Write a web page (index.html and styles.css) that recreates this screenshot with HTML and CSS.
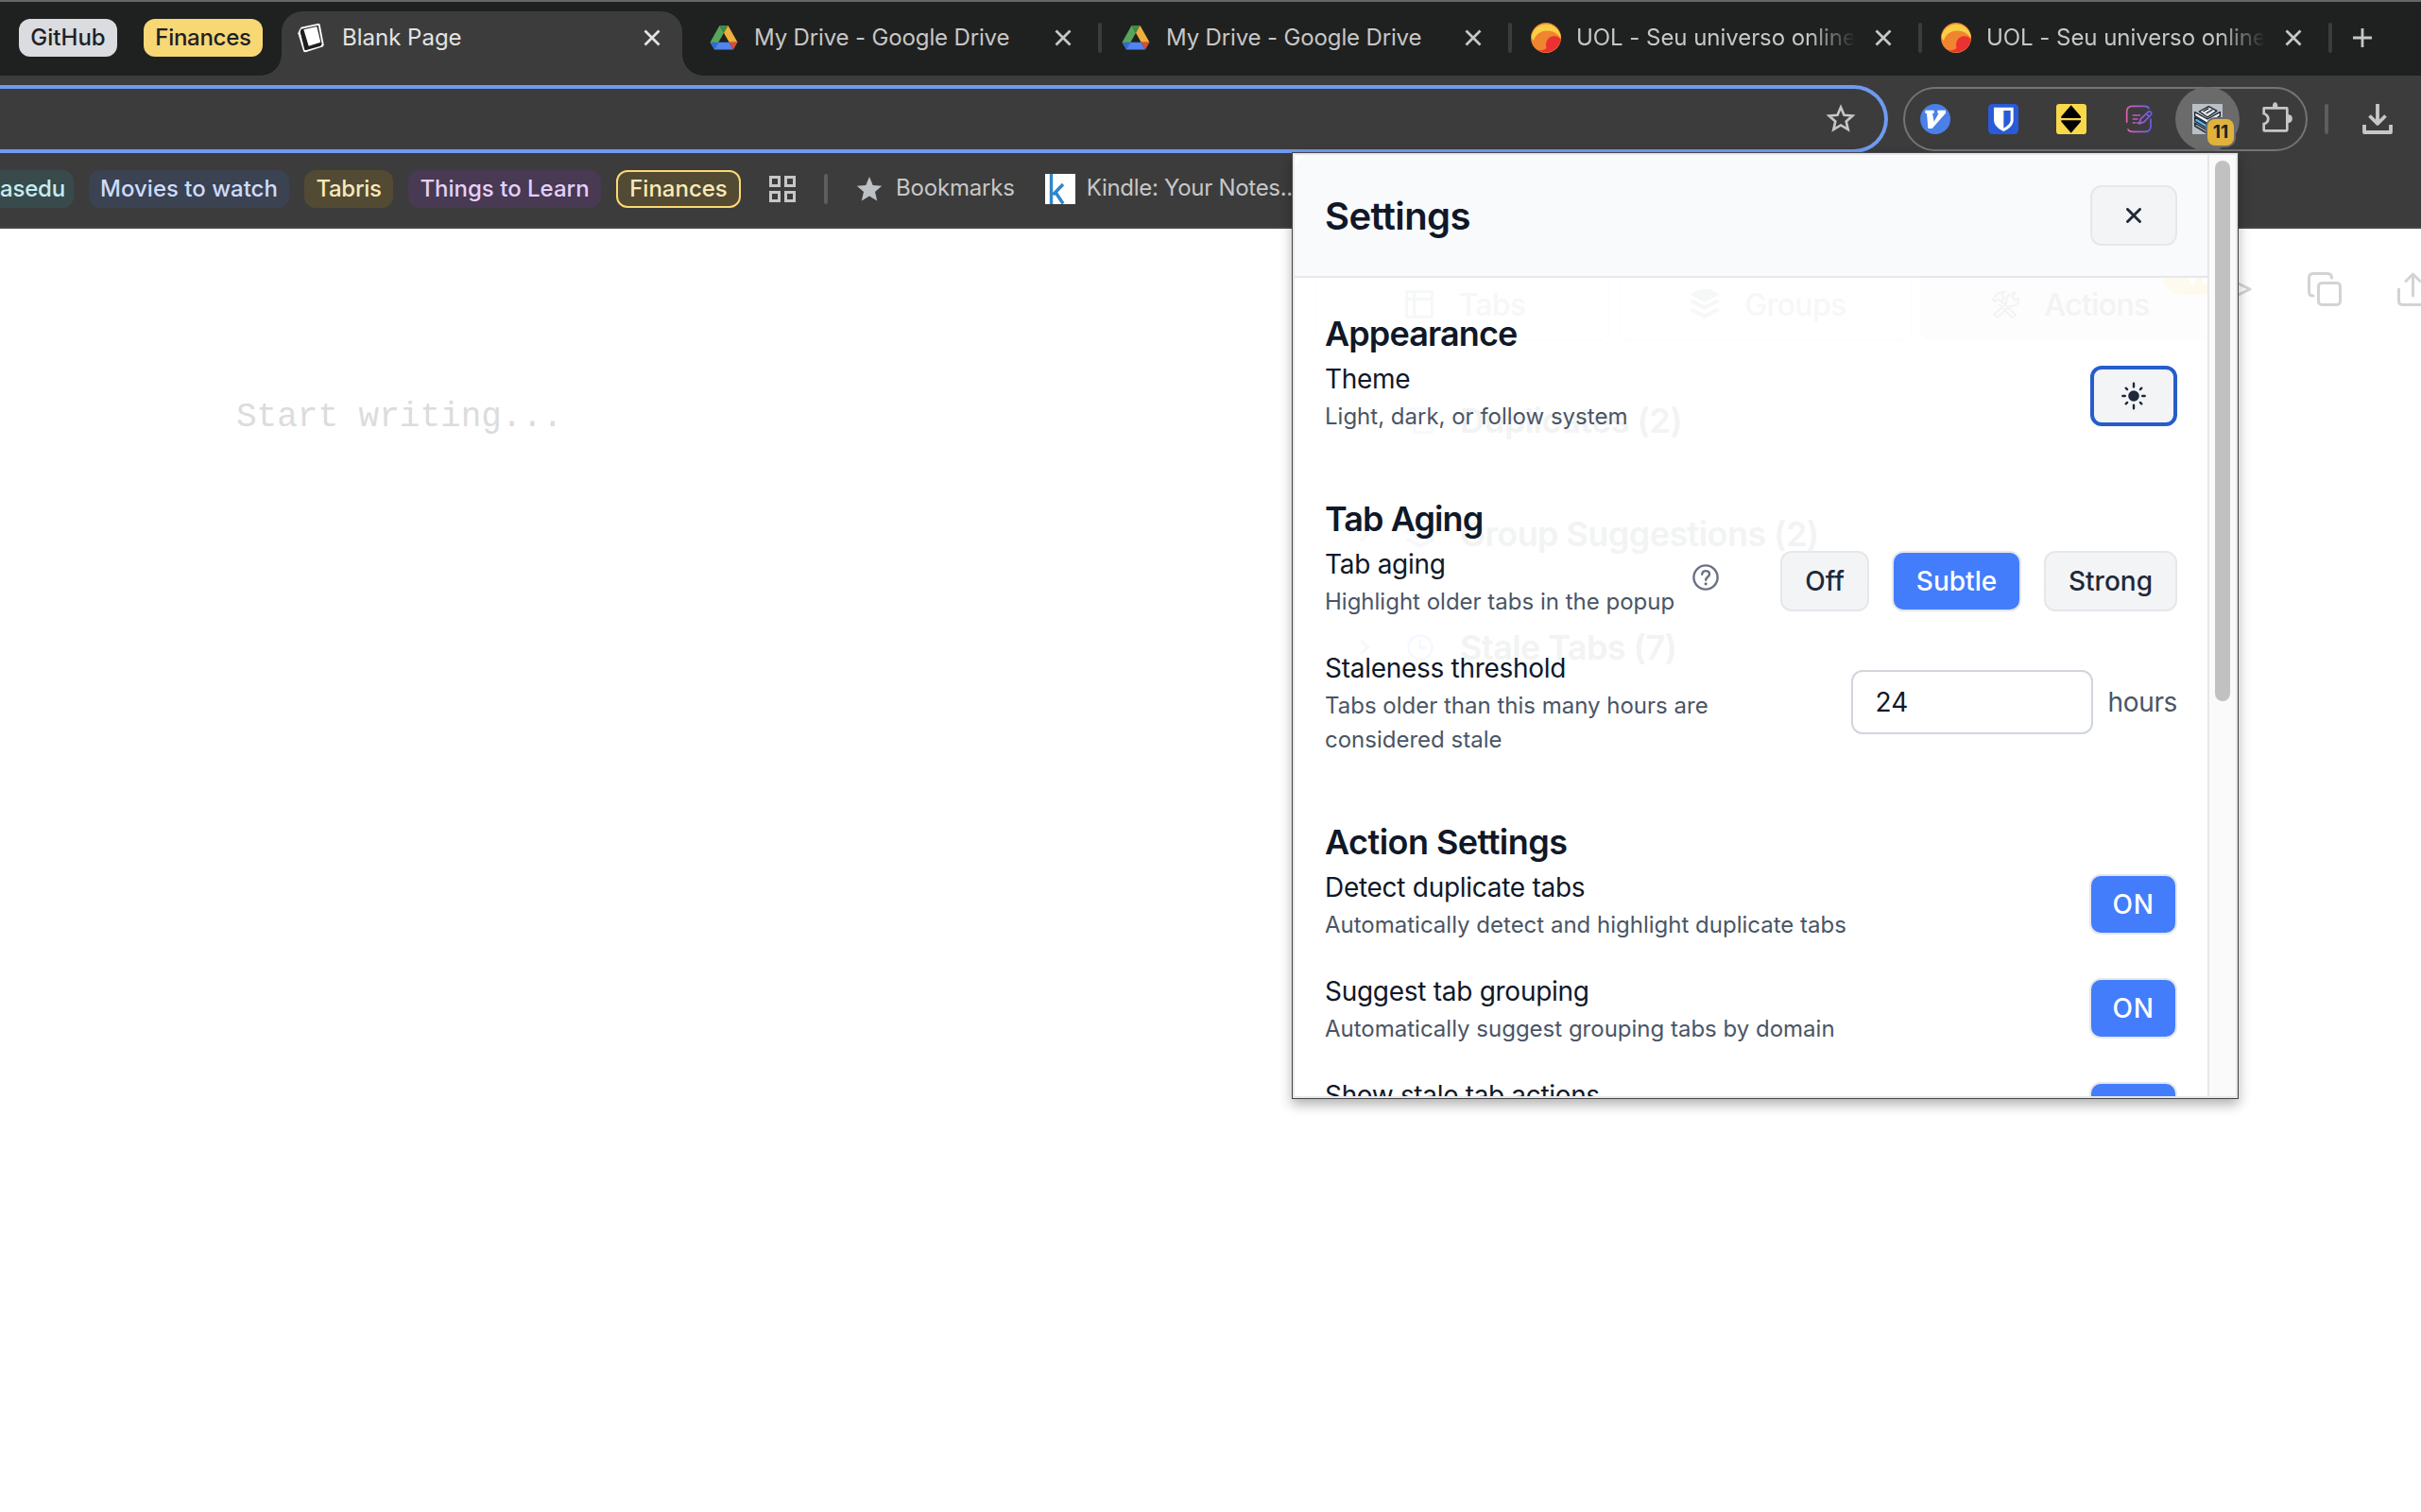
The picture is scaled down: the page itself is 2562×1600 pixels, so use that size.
FILE: index.html
```
<!DOCTYPE html>
<html lang="en">
<head>
<meta charset="utf-8">
<title>Blank Page</title>
<link rel="stylesheet" href="styles.css">
</head>
<body>
<svg class="defs" width="0" height="0">
  <symbol id="close" viewBox="0 0 24 24"><path d="M4.500 4.500 19.500 19.500M19.500 4.500 4.500 19.500" fill="none" stroke="currentColor" stroke-width="2.800"/></symbol>
  <symbol id="drive" viewBox="0 0 32 32">
    <path d="M11.500 3 1.500 20.700 6 28.500 16 10.800z" fill="#58a65b"/>
    <path d="M11.500 3h9L16 10.800z" fill="#3f8a45"/>
    <path d="M20.500 3 16 10.800 21.600 20.700h8.900z" fill="#f0ae3c"/>
    <path d="M1.500 20.700h8.900L6 28.500z" fill="#3567d6"/>
    <path d="M10.400 20.700h11.200L26 28.500H6z" fill="#5084ee"/>
    <path d="M21.600 20.700h8.900L26 28.500z" fill="#dc4c3a"/>
  </symbol>
  <symbol id="uol" viewBox="0 0 32 32">
    <circle cx="16" cy="16" r="16" fill="#f0852f"/>
    <path d="M.8 13A16 16 0 0 1 31.500 13l-.2 4C27 6 7 5 3 19 1.500 18 .6 15.500.8 13z" fill="#f9cf45"/>
    <path d="M31.800 18A16 16 0 0 1 7 28.500c4 1.500 8 .5 9.500-2-1.500-4 .5-11.500 7-12.300 4-.4 7 .8 8.300 3.800z" fill="#ec3230"/>
  </symbol>
  <symbol id="layers" viewBox="0 0 32 32"><path d="M16 -3 32 5.500 16 14 0 5.500zM3.500 11 16 17.500 28.500 11 32 13.500 16 22 0 13.500zM3.500 20 16 26.500 28.500 20 32 22.500 16 31 0 22.500z" fill="currentColor"/></symbol>
</svg>

<header class="tabstrip">
  <span class="chip chip-grey">GitHub</span>
  <span class="chip chip-yellow">Finances</span>
  <div class="tab tab-active">
    <svg class="favicon" viewBox="0 0 96 96"><path d="M8 24 L14 14 70 2 74 6 86 70 84 76 28 94 22 92 4 34z" fill="#fff"/><path d="M11 29 14 20 68 8 80 68 76 74 28 88 25 86z" fill="#1f1f1f"/><path d="M22 22 64 12 76 62 38 74z" fill="#fff"/></svg>
    <span class="tab-title">Blank Page</span>
    <svg class="tab-close"><use href="#close"/></svg>
  </div>
  <div class="tab tab-first">
    <svg class="favicon"><use href="#drive"/></svg>
    <span class="tab-title">My Drive - Google Drive</span>
    <svg class="tab-close"><use href="#close"/></svg>
  </div>
  <i class="sep"></i>
  <div class="tab">
    <svg class="favicon"><use href="#drive"/></svg>
    <span class="tab-title">My Drive - Google Drive</span>
    <svg class="tab-close"><use href="#close"/></svg>
  </div>
  <i class="sep"></i>
  <div class="tab">
    <svg class="favicon"><use href="#uol"/></svg>
    <span class="tab-title fade">UOL - Seu universo online</span>
    <svg class="tab-close"><use href="#close"/></svg>
  </div>
  <i class="sep"></i>
  <div class="tab">
    <svg class="favicon"><use href="#uol"/></svg>
    <span class="tab-title fade">UOL - Seu universo online</span>
    <svg class="tab-close"><use href="#close"/></svg>
  </div>
  <i class="sep"></i>
  <svg class="new-tab" viewBox="0 0 24 24"><path d="M12 2v20M2 12h20" stroke="currentColor" stroke-width="2.800"/></svg>
</header>

<div class="toolbar">
  <div class="omnibox">
    <svg class="fav-star" viewBox="0 0 32 32"><path d="M16 3.500l3.500 8.200 8.900.8-6.700 5.900 2 8.700L16 22.500l-7.700 4.600 2-8.700-6.700-5.900 8.900-.8z" fill="none" stroke="currentColor" stroke-width="2.600"/></svg>
  </div>
  <div class="extensions">
    <svg class="ext" viewBox="0 0 96 96"><circle cx="48" cy="48" r="48" fill="#4a80e8"/><path d="M16 20h28v10h-5l5 26 15-27h-4v-9h26v9L38 78H25l-4-48h-5z" fill="#fff"/></svg>
    <svg class="ext" viewBox="0 0 96 96"><rect width="96" height="96" rx="14" fill="#2a5bd7"/><path d="M18 11h62v40c0 17-16 29-31 36C34 80 18 68 18 51z" fill="#fff"/><path d="M49 21h22v30c0 11-10 19-22 26z" fill="#2a5bd7"/></svg>
    <svg class="ext" viewBox="0 0 96 96"><rect width="96" height="96" rx="10" fill="#f9d949"/><path d="M47 4 78 40v5H16v-5zM16 52h62v4L47 92 16 56z" fill="#000"/></svg>
    <svg class="ext" viewBox="0 0 96 96">
      <defs><linearGradient id="note" gradientUnits="userSpaceOnUse" x1="6" y1="0" x2="86" y2="0"><stop offset="0" stop-color="#e85fb0"/><stop offset="1" stop-color="#6a5cf0"/></linearGradient></defs>
      <g fill="none" stroke="url(#note)" stroke-width="5" stroke-linecap="round"><path d="M8 58V24C8 12 14 7 26 7h38c8 0 12 2 14 7M84 48v22c0 12-5 18-17 18H26c-8 0-12-2-14-7"/><path d="M28 36h22M28 48h14M28 60h6M40 60h6M48 62l4-14 24-23c6-4 13 3 9 9L62 58z M70 31l9 9"/></g>
    </svg>
    <span class="ext-active">
      <svg class="ext" viewBox="0 0 96 96"><rect width="96" height="96" fill="#b9bfc3"/><g stroke="#1d2733" stroke-width="4" stroke-linejoin="round"><path d="M8 60 48 84 88 60V72L48 94 8 70z" fill="#98a1a8"/><path d="M8 42 48 66 88 42V54L48 78 8 54z" fill="#55bdf0"/><path d="M8 26 48 48 88 26V38L48 62 8 38z" fill="#f4f6f7"/><path d="M22 24 52 8 78 22 48 42z" fill="#e3e6e8"/><path d="M34 24 52 14M44 30 64 18" fill="none"/></g></svg>
      <b class="badge">11</b>
    </span>
    <svg class="ext puzzle" viewBox="0 0 96 96"><path d="M7 9h26c-2-19 18-19 16 0h27c4 0 7 2 7 6v19c17-2 17 28 0 26v22c0 4-3 7-7 7H7c-4 0-6-3-6-7V60c18 0 18-24 0-26V15c0-4 2-6 6-6z" fill="#c7c7c7"/><path d="M9 17h66v64H9V67c19-8 19-31 0-39z" fill="#3c3c3c"/></svg>
  </div>
  <i class="sep sep-light"></i>
  <svg class="download" viewBox="0 0 32 32"><path d="M16 0v20M7.500 12.500 16 21l8.500-8.500M2 22v8h28v-8" fill="none" stroke="currentColor" stroke-width="3.800" stroke-linejoin="round"/></svg>
</div>

<nav class="bookmarks">
  <span class="group teal">asedu</span>
  <span class="group blue">Movies to watch</span>
  <span class="group olive">Tabris</span>
  <span class="group purple">Things to Learn</span>
  <span class="group olive open">Finances</span>
  <svg class="grid-icon" viewBox="0 0 28 28"><path d="M1.500 1.500h9v9h-9zM17.500 1.500h9v9h-9zM1.500 17.500h9v9h-9zM17.500 17.500h9v9h-9z" fill="none" stroke="currentColor" stroke-width="3"/></svg>
  <i class="sep sep-light"></i>
  <svg class="bm-star" viewBox="0 0 28 28"><path d="M14 1l3.700 9 9.500.8-7.200 6.300 2.200 9.400L14 21.500l-8.200 5 2.200-9.400L.8 10.800l9.500-.8z" fill="#bdc1c6"/></svg>
  <span class="bm-label">Bookmarks</span>
  <svg class="kindle" viewBox="0 0 32 32"><rect width="32" height="32" fill="#fff"/><path d="M6.500 0v32M19 11 8.500 22M11 19.500 19 31.500" fill="none" stroke="#2f86c9" stroke-width="3.400"/></svg>
  <span class="bm-label long">Kindle: Your Notes...</span>
</nav>

<main class="page">
  <p class="placeholder">Start writing...</p>
  <div class="page-tools">
    <svg viewBox="0 0 36 36"><path d="M5 4 34 18 5 32z"/></svg>
    <svg viewBox="0 0 36 36"><path d="M6 25C3 25 1.500 23.500 1.500 21V6C1.500 3 3 1.500 6 1.500h15c3 0 4.500 1.500 4.500 4.500"/><rect x="11.500" y="11.500" width="23" height="23" rx="3.500"/></svg>
    <svg viewBox="0 0 36 36"><path d="M1.500 18v12.500c0 2.500 1.500 4 4 4h22c2.500 0 4-1.500 4-4V18M16.500 25V2M9 9.500 16.500 2 24 9.500"/></svg>
  </div>
</main>

<section class="popup">
  <div class="panel">
    <div class="underlay">
      <div class="u-tabs">
        <div class="u-tab"><svg viewBox="0 0 28 28"><path d="M1.500 1.500h25v25h-25zM1.500 9h25M9 1.500v25" fill="none" stroke="currentColor" stroke-width="2.500"/></svg><span>Tabs</span></div>
        <div class="u-tab"><svg class="u-layers"><use href="#layers"/></svg><span>Groups</span></div>
        <div class="u-tab u-current"><svg viewBox="0 0 32 32"><path d="M2 11c3-6 7-9 13-9l-3 4 3 3-4 4-3-3-4 3zM12 13l16 15-4 3L9 16M7 31l-4-3 14-13c-1-6 3-11 10-12l-3 5 3 3 5-2c0 6-5 10-11 9z" fill="none" stroke="currentColor" stroke-width="2"/></svg><span>Actions</span><b class="u-badge">11</b></div>
      </div>
      <div class="u-row"><i></i><svg viewBox="0 0 28 28"><path d="M5 20H1.500V1.500H20V5M8 8h18.500v18.500H8z" fill="none" stroke="currentColor" stroke-width="2.500"/></svg><span>Duplicates (2)</span></div>
      <div class="u-row"><i></i><svg class="u-stack" viewBox="0 0 32 32"><use href="#layers"/></svg><span>Group Suggestions (2)</span></div>
      <div class="u-row"><i></i><svg viewBox="0 0 28 28"><circle cx="14" cy="14" r="12.500" fill="none" stroke="currentColor" stroke-width="2.500"/><path d="M14 6v8.500h7" fill="none" stroke="currentColor" stroke-width="2.500"/></svg><span>Stale Tabs (7)</span></div>
    </div>

    <div class="panel-head">
      <h1>Settings</h1>
      <button class="btn icon-btn"><svg width="16" height="16" viewBox="0 0 16 16"><path d="M1.500 1.500l13 13M14.500 1.500l-13 13" stroke="#1e2939" stroke-width="2.900" stroke-linecap="round"/></svg></button>
    </div>

    <div class="panel-body">
      <section>
        <h2>Appearance</h2>
        <div class="row">
          <div class="text"><p class="label">Theme</p><p class="desc">Light, dark, or follow system</p></div>
          <button class="btn icon-btn focused"><svg width="26" height="30" viewBox="0 0 26 30"><circle cx="13" cy="15" r="5.800" fill="#1e2939"/><path d="M13 1.800v3.600M13 24.600v3.600M1.300 15h2.500M22.200 15h2.500M4.700 6.700l1.400 1.400M19.900 21.900l1.400 1.400M4.700 23.300l1.400-1.400M19.900 8.100l1.400-1.400" stroke="#1e2939" stroke-width="2.400" stroke-linecap="round"/></svg></button>
        </div>
      </section>
      <section>
        <h2>Tab Aging</h2>
        <div class="row">
          <div class="text with-help">
            <div><p class="label">Tab aging</p><p class="desc">Highlight older tabs in the popup</p></div>
            <svg class="help" viewBox="0 0 28 28"><circle cx="14" cy="14" r="12.600" fill="none" stroke="#6a7282" stroke-width="2.400"/><path d="M10.200 10.800c.3-5 8-4.700 7.800-.2-.1 2.900-3.800 3-3.800 6.200" fill="none" stroke="#6a7282" stroke-width="2.400" stroke-linecap="round"/><circle cx="14.100" cy="20.800" r="1.600" fill="#6a7282"/></svg>
          </div>
          <div class="choices"><button class="btn w-off">Off</button><button class="btn primary w-subtle">Subtle</button><button class="btn w-strong">Strong</button></div>
        </div>
        <div class="row">
          <div class="text narrow"><p class="label">Staleness threshold</p><p class="desc">Tabs older than this many hours are considered stale</p></div>
          <div class="field"><span class="input">24</span><span class="unit">hours</span></div>
        </div>
      </section>
      <section>
        <h2 class="wide">Action Settings</h2>
        <div class="row">
          <div class="text"><p class="label">Detect duplicate tabs</p><p class="desc">Automatically detect and highlight duplicate tabs</p></div>
          <button class="btn primary toggle">ON</button>
        </div>
        <div class="row">
          <div class="text"><p class="label">Suggest tab grouping</p><p class="desc">Automatically suggest grouping tabs by domain</p></div>
          <button class="btn primary toggle">ON</button>
        </div>
        <div class="row">
          <div class="text"><p class="label tight">Show stale tab actions</p><p class="desc">Offer actions for tabs past the threshold</p></div>
          <button class="btn primary toggle">ON</button>
        </div>
      </section>
    </div>
  </div>
  <div class="scrollbar"><div class="thumb"></div></div>
</section>
</body>
</html>
```
FILE: styles.css
```
* { box-sizing: border-box; }
body {
  margin: 0;
  width: 2562px;
  height: 1600px;
  overflow: hidden;
  position: relative;
  display: flex;
  flex-direction: column;
  background: #fff;
  font-family: Inter, "Liberation Sans", sans-serif;
}
p, h1, h2 { margin: 0; }
svg { display: block; flex: none; }
.defs { position: absolute; }
.sep { flex: none; width: 4px; height: 32px; border-radius: 2px; background: #3c3c3c; }
.sep-light { background: #5e5e5e; }

/* tab strip */
.tabstrip {
  flex: none;
  height: 80px;
  padding: 0 0 2px 20px;
  border-top: 2px solid #646766;
  background: #1f2120;
  display: flex;
  align-items: center;
  color: #c7c7c7;
  font-size: 24px;
}
.chip {
  height: 40px;
  line-height: 40px;
  border-radius: 12px;
  text-align: center;
  font-weight: 500;
  color: #202124;
}
.chip-grey { width: 104px; background: #dadce0; }
.chip-yellow { width: 126px; margin-left: 28px; background: #f8d775; letter-spacing: -.012em; }
.tab { flex: none; width: 430px; height: 76px; padding: 0 24px 0 20px; display: flex; align-items: center; }
.favicon { width: 32px; height: 32px; margin-right: 16px; }
.tab-title { flex: 1; white-space: nowrap; overflow: hidden; line-height: 40px; letter-spacing: -.006em; }
.fade { margin-right: 20px; letter-spacing: -.002em; -webkit-mask-image: linear-gradient(90deg, #000 84%, transparent 101%); mask-image: linear-gradient(90deg, #000 84%, transparent 101%); }
.tab-close { width: 24px; height: 24px; margin-right: 1px; }
.tab-first { width: 440px; padding-left: 28px; }
.tab-active {
  position: relative;
  align-self: flex-start;
  width: 424px;
  height: 68px;
  margin: 10px 0 0 20px;
  padding: 0 19px 12px 16px;
  border-radius: 22px 22px 0 0;
  background: #3c3c3c;
  color: #e3e3e3;
}
.tab-active .tab-title { letter-spacing: 0; }
.tab-active::before, .tab-active::after { content: ""; position: absolute; bottom: 0; width: 22px; height: 22px; }
.tab-active::before { left: -22px; background: radial-gradient(circle at 0 0, transparent 21.500px, #3c3c3c 22px); }
.tab-active::after { right: -22px; background: radial-gradient(circle at 100% 0, transparent 21.500px, #3c3c3c 22px); }
.new-tab { width: 24px; height: 24px; margin-left: 20px; }

/* toolbar */
.toolbar { flex: none; height: 82px; padding-top: 10px; display: flex; align-items: center; background: #3c3c3c; color: #c7c7c7; }
.omnibox {
  width: 1998px;
  height: 72px;
  padding-right: 30px;
  border: 4px solid #6e9bf0;
  border-left: 0;
  border-radius: 0 36px 36px 0;
  display: flex;
  align-items: center;
  justify-content: flex-end;
}
.fav-star { width: 32px; height: 32px; }
.extensions { width: 428px; height: 68px; margin-left: 16px; padding-left: 16px; border: 2px solid #747474; border-radius: 34px; display: flex; align-items: center; gap: 40px; }
.ext { width: 32px; height: 32px; }
.puzzle { margin-left: 2px; overflow: visible; }
.ext-active { position: relative; flex: none; width: 68px; height: 68px; margin: 0 -18px; border-radius: 50%; background: #6b6b6b; display: flex; align-items: center; justify-content: center; }
.badge {
  position: absolute;
  left: 34px;
  top: 34px;
  width: 28px;
  height: 28px;
  border-radius: 8px;
  box-shadow: 0 0 0 2px #6b6b6b;
  background: #e0b23c;
  color: #202124;
  font: 700 19px/28px Inter, sans-serif;
  text-align: center;
}
.toolbar .sep { margin: 0 36px 0 18px; }
.download { width: 32px; height: 32px; }

/* bookmarks bar */
.bookmarks { flex: none; height: 80px; border-bottom: 2px solid #464646; padding-bottom: 2px; display: flex; align-items: center; background: #3c3c3c; color: #c7c7c7; font-size: 24px; }
.group { flex: none; height: 40px; line-height: 40px; margin-right: 16px; border-radius: 12px; text-align: center; font-weight: 500; white-space: nowrap; }
.teal { width: 78px; padding-right: 13px; background: #394a4c; color: #c5edf2; border-radius: 0 12px 12px 0; text-align: right; letter-spacing: -.008em; }
.blue { width: 212px; background: #3b4252; color: #cddcfa; }
.olive { width: 94px; background: #524a33; color: #fbe9b7; letter-spacing: -.012em; }
.purple { width: 204px; background: #473a52; color: #e6cffb; }
.open { width: 132px; line-height: 36px; border: 2px solid #fad872; letter-spacing: 0; }
.grid-icon { width: 28px; height: 28px; margin: 0 30px 0 14px; }
.bm-star { width: 28px; height: 28px; margin: 0 14px 0 30px; }
.bm-label { white-space: nowrap; line-height: 36px; padding-bottom: 2px; letter-spacing: -.008em; }
.bm-label.long { letter-spacing: -.012em; }
.kindle { width: 32px; height: 32px; margin: 0 12px 0 32px; }

/* page */
.page { flex: 1; display: flex; justify-content: space-between; align-items: flex-start; background: #fff; }
.placeholder { margin: 176px 0 0 250px; font: 36px/48px "Liberation Mono", monospace; color: #dcdcdc; }
.page-tools { display: flex; gap: 59px; padding-top: 46px; margin-right: -11px; }
.page-tools svg { width: 36px; height: 36px; fill: none; stroke: #d3d3d5; stroke-width: 3; stroke-linejoin: round; stroke-linecap: round; }

/* popup */
.popup {
  position: absolute;
  left: 1368px;
  top: 162px;
  width: 1000px;
  height: 1000px;
  display: flex;
  border: 2px solid #e5e7eb;
  background: #fff;
  box-shadow: 0 0 0 1px #454545, 0 6px 12px 1px rgba(0, 0, 0, .3);
}
.panel { position: relative; flex: none; width: 968px; height: 996px; border-right: 2px solid #e5e7eb; border-radius: 16px 0 0 16px; overflow: hidden; letter-spacing: 0; }
.scrollbar { flex: 1; padding: 6px 6px 0; background: #fafafa; }
.thumb { width: 16px; height: 572px; border-radius: 8px; background: #c1c1c1; }

.panel-head { position: relative; height: 130px; padding: 0 32px; border-bottom: 2px solid #e5e7eb; background: #f9fafb; display: flex; align-items: center; justify-content: space-between; }
h1 { font-size: 40px; font-weight: 600; letter-spacing: -.015em; color: #101828; }
h2 { font-size: 36px; line-height: 54px; font-weight: 600; letter-spacing: -.025em; color: #101828; }
h2.wide { letter-spacing: -.015em; }
.panel-body { position: relative; padding: 32px; display: flex; flex-direction: column; gap: 64px; }
.row { display: flex; align-items: center; justify-content: space-between; }
.row + .row { margin-top: 32px; }
.label { font-size: 28px; line-height: 43px; letter-spacing: -.01em; color: #101828; }
.label.tight { letter-spacing: -.012em; }
.desc { margin-bottom: -1px; font-size: 24px; line-height: 36px; color: #4a5565; }
.narrow { width: 430px; }
.with-help { display: flex; gap: 19px; }
.help { width: 28px; height: 28px; margin-top: 21px; }

.btn { height: 64px; padding: 0; border: 2px solid #e5e7eb; border-radius: 12px; background: #f3f4f6; color: #1e2939; font: 500 28px/60px Inter, sans-serif; text-align: center; }
.icon-btn { width: 92px; display: flex; align-items: center; justify-content: center; }
.focused { border: 4px solid #265dcb; }
.primary { background: #437dfc; color: #fff; }
.toggle { width: 93px; letter-spacing: .02em; }
.choices { display: flex; gap: 24px; }
.w-off { width: 94px; }
.w-subtle { width: 137px; }
.w-strong { width: 141px; }
.field { display: flex; align-items: center; gap: 16px; font-size: 28px; color: #4a5565; }
.unit { letter-spacing: -.013em; }
.input { width: 256px; height: 68px; padding-left: 24px; border: 2px solid #d1d5dc; border-radius: 12px; line-height: 64px; background: #fff; color: #101828; }

/* previous view showing faintly through the panel */
.underlay { position: absolute; left: 22px; top: 119px; width: 960px; color: #f6f7f7; font-size: 36px; font-weight: 600; }
.u-tabs { display: flex; gap: 8px; height: 78px; margin-bottom: 24px; font-size: 32px; font-weight: 500; letter-spacing: -.02em; }
.u-tab { position: relative; width: 312px; padding-left: 6px; border: 2px solid #fdfdfd; border-radius: 12px; display: flex; align-items: center; justify-content: center; gap: 26px; }
.u-tab svg { width: 30px; height: 30px; }
.u-tab .u-layers { width: 32px; height: 32px; overflow: visible; }
.u-current { background: #fdfdfd; color: #f3f3f3; }
.u-badge { position: absolute; right: -18px; top: -17px; width: 72px; height: 44px; border-radius: 22px; background: #fffaee; color: #fff; text-align: center; line-height: 44px; }
.u-row { height: 120px; border-bottom: 1px solid #fdfdfd; display: flex; align-items: center; letter-spacing: -.016em; color: #f2f3f3; }
.u-row i { width: 12px; height: 12px; margin: 0 42px 0 43px; border: solid #f7f8f9; border-width: 3px 3px 0 0; transform: rotate(45deg); }
.u-row svg { width: 28px; height: 28px; margin-right: 28px; color: #f5f8ff; }
.u-row .u-stack { width: 32px; height: 32px; margin: 0 26px 0 -2px; overflow: visible; }
```
